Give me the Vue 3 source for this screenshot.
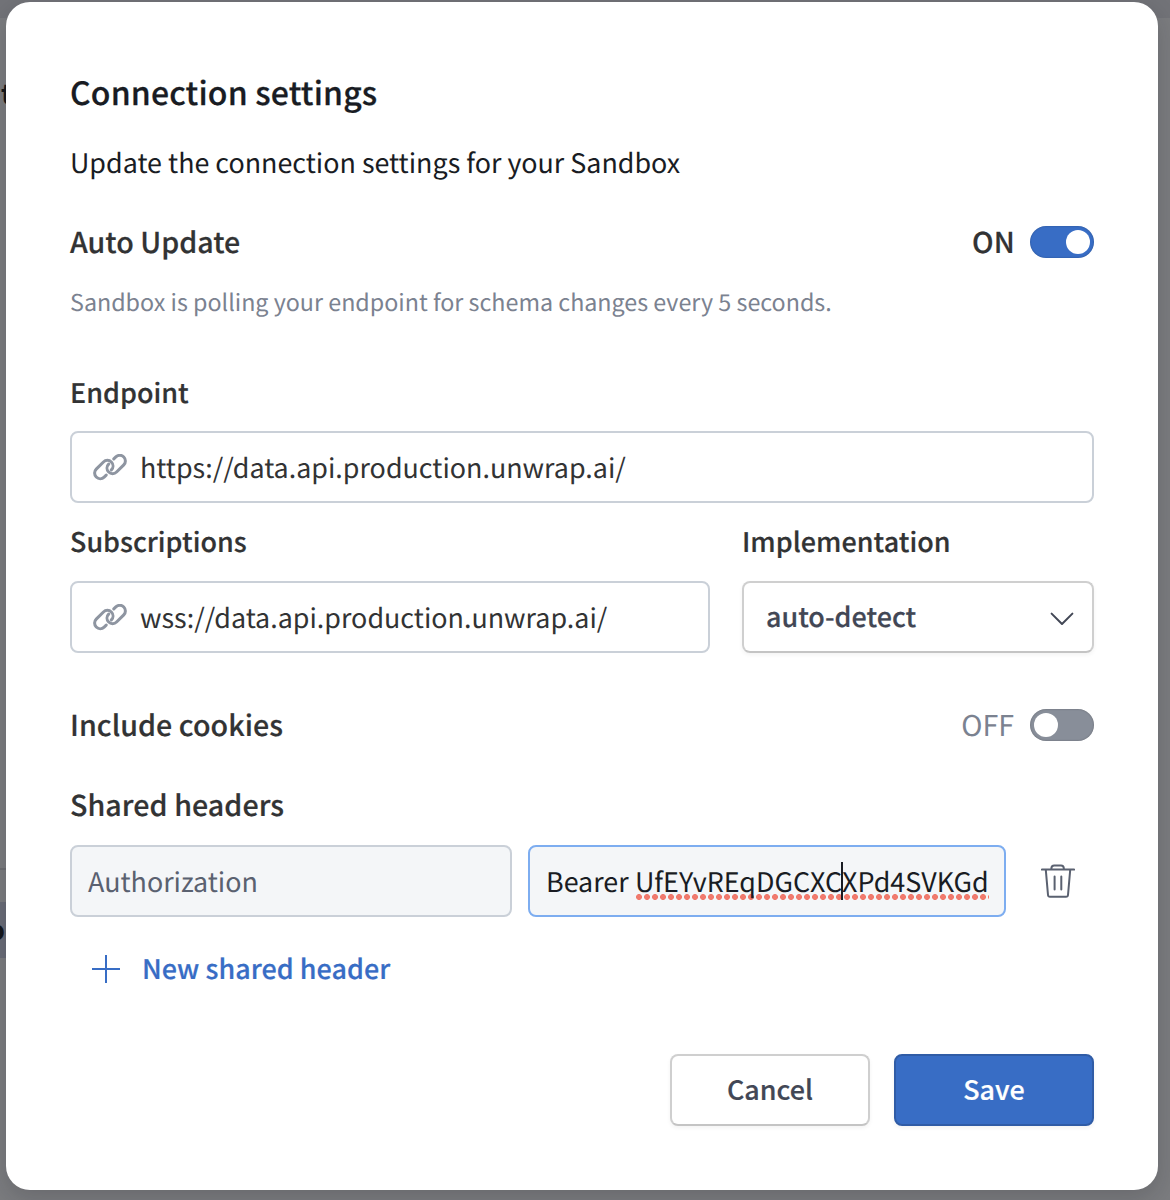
<script setup>
import { ref } from 'vue'

const endpoint = ref('https://data.api.production.unwrap.ai/')
const subscriptions = ref('wss://data.api.production.unwrap.ai/')
const autoUpdate = ref(true)
const includeCookies = ref(false)
</script>

<template>
  <div class="page">
    <div class="strip"></div>
    <div class="rule"></div>
    <div class="band"></div>
    <span class="peek peek-t">t</span>
    <span class="peek peek-o">o</span>

    <section class="modal">
      <h1>Connection settings</h1>
      <p class="intro">Update the connection settings for your Sandbox</p>

      <div class="toggle-row auto-row">
        <span class="title auto">Auto Update</span>
        <span class="state on">ON</span>
        <button class="switch" :class="{ active: autoUpdate }" @click="autoUpdate = !autoUpdate"><i></i></button>
      </div>
      <p class="hint">Sandbox is polling your endpoint for schema changes every 5 seconds.</p>

      <div class="label endpoint-label">Endpoint</div>
      <div class="field">
        <svg class="link" viewBox="0 0 34 27"><path d="M13.2 21.1 11.16 23.06A5.6 5.6 0 1 1 3.24 15.14L10.44 7.94A5.6 5.6 0 0 1 18.36 15.86M20.8 4.9 22.84 2.94A5.6 5.6 0 1 1 30.76 10.86L23.56 18.06A5.6 5.6 0 0 1 15.64 10.14" /></svg>
        <span class="value">{{ endpoint }}</span>
      </div>

      <div class="columns">
        <div class="subs">
          <div class="label subs-label">Subscriptions</div>
          <div class="field">
            <svg class="link" viewBox="0 0 34 27"><path d="M13.2 21.1 11.16 23.06A5.6 5.6 0 1 1 3.24 15.14L10.44 7.94A5.6 5.6 0 0 1 18.36 15.86M20.8 4.9 22.84 2.94A5.6 5.6 0 1 1 30.76 10.86L23.56 18.06A5.6 5.6 0 0 1 15.64 10.14" /></svg>
            <span class="value">{{ subscriptions }}</span>
          </div>
        </div>
        <div class="impl">
          <div class="label impl-label">Implementation</div>
          <div class="select">
            <span>auto-detect</span>
            <svg width="24" height="14" viewBox="0 0 24 14"><path d="M1.6 1.6 12 12 22.4 1.6" /></svg>
          </div>
        </div>
      </div>

      <div class="toggle-row cookies-row">
        <span class="title cookies">Include cookies</span>
        <span class="state off">OFF</span>
        <button class="switch" :class="{ active: includeCookies }" @click="includeCookies = !includeCookies"><i></i></button>
      </div>

      <div class="title headers">Shared headers</div>
      <div class="header-row">
        <div class="cell name">Authorization</div>
        <div class="cell token"><span class="bearer">Bearer</span><span class="misspelt">UfEYvREqDGCXC<span class="caret"></span>XPd4SVKGd</span></div>
        <svg class="trash" viewBox="0 0 34 34"><path d="M.8 5.6H33.2M10.4 5.4V4.2Q10.4 1.4 13.2 1.4H20Q22.8 1.4 22.8 4.2V5.4M4.8 5.8 7 31Q7.2 32.8 9 32.8H25Q26.8 32.8 27 31L29.2 5.8M13.6 12.6V25.4M20.3 12.6V25.4" /></svg>
      </div>

      <div class="add">
        <svg width="28" height="28" viewBox="0 0 28 28"><path d="M14 0V28M0 14H28" /></svg>
        <span>New shared header</span>
      </div>

      <div class="actions">
        <button class="btn cancel">Cancel</button>
        <button class="btn save">Save</button>
      </div>
    </section>
  </div>
</template>

<style>
body { margin: 0; }
</style>

<style scoped>
* { box-sizing: border-box; }
.page {
  position: relative; width: 1170px; height: 1200px; overflow: hidden;
  padding: 2px 0 0 6px; background: #7b7c7f;
  font-family: "Noto Sans CJK JP", "Noto Sans", sans-serif;
  text-rendering: geometricPrecision; white-space: nowrap;
}
.strip { position: absolute; inset: 0 0 auto 0; height: 18px; background: #727378; }
.rule { position: absolute; left: 0; top: 868px; width: 8px; height: 2px; background: #6d6e72; }
.band { position: absolute; left: 0; top: 902px; width: 8px; height: 56px; background: #696c77; }
.peek { position: absolute; color: #14161b; font-weight: 700; font-size: 27px; line-height: 40px; }
.peek-t { left: 1px; top: 73px; }
.peek-o { left: -12px; top: 909px; }
.modal {
  position: relative; width: 1152px; height: 1188px; padding: 70px 64px 0;
  border-radius: 24px; background: #fff; box-shadow: 0 8px 24px rgba(20, 22, 30, .18);
}
h1 {
  margin: 0; font-size: 32px; line-height: 40px; font-weight: 500; letter-spacing: .17px;
  color: #191c23; -webkit-text-stroke: .25px #191c23;
}
.intro { margin: 30px 0 0; font-size: 26.86px; line-height: 40px; color: #191c23; }
.toggle-row { display: flex; align-items: flex-start; height: 32px; }
.auto-row { margin-top: 44px; }
.cookies-row { margin-top: 56px; }
.title { font-size: 28.6px; line-height: 31px; font-weight: 500; color: #323334; -webkit-text-stroke: .2px #323334; }
.cookies { letter-spacing: .06px; }
.headers { margin-top: 48px; letter-spacing: .08px; }
.state { margin-left: auto; margin-right: 16px; font-size: 28.6px; line-height: 31px; }
.on { margin-right: 15px; font-weight: 500; color: #323334; -webkit-text-stroke: .2px #323334; letter-spacing: .2px; }
.off { color: #7b8290; }
.switch {
  display: flex; width: 64px; height: 32px; padding: 4px; border: 0; border-radius: 16px;
  background: #888e99; box-shadow: inset 0 0 2px rgba(0, 0, 0, .3);
}
.switch i { width: 24px; height: 24px; border-radius: 50%; background: #fff; }
.switch.active { justify-content: flex-end; background: #386dc5; }
.hint { margin: 27px 0 0; font-size: 23.29px; line-height: 32px; color: #7b8290; }
.label {
  font-size: 26.9px; line-height: 32px; font-weight: 500; letter-spacing: .03px;
  color: #323334; -webkit-text-stroke: .2px #323334;
}
.endpoint-label { margin: 59px 0 23px; }
.subs-label, .impl-label { margin: 22px 0 24px; }
.impl-label { letter-spacing: .05px; }
.field {
  display: flex; align-items: center; height: 72px; padding-left: 21px;
  border: 2px solid #cad0d8; border-radius: 8px;
}
.link { width: 34px; height: 27px; fill: none; stroke: #8e95a1; stroke-width: 3; stroke-linecap: round; }
.value { margin-left: 13px; padding-bottom: 1px; font-size: 26.86px; line-height: 40px; color: #323334; }
.columns { display: flex; gap: 32px; }
.subs { width: 640px; }
.impl { width: 352px; }
.select {
  display: flex; align-items: center; justify-content: space-between; height: 72px; padding: 0 18px 0 22px;
  border: 2px solid #cfcfcf; border-bottom-color: #c4c4c4; border-radius: 8px;
  box-shadow: 0 2px 4px rgba(0, 0, 0, .05);
}
.select span { padding-bottom: 3px; font-size: 26.9px; line-height: 40px; font-weight: 500; color: #424755; -webkit-text-stroke: .2px #424755; }
.select svg { fill: none; stroke: #424755; stroke-width: 2; stroke-linecap: round; stroke-linejoin: round; margin-top: 3px; }
.header-row { display: flex; align-items: center; margin-top: 25px; }
.cell {
  height: 72px; padding: 0 16px; border: 2px solid #cad0d8; border-radius: 8px;
  background: #f4f6f8; font-size: 26.86px; line-height: 67px; color: #5a6170;
}
.name { width: 442px; }
.token { display: flex; width: 478px; margin-left: 16px; border-color: #7dadf0; color: #191c23; }
.bearer { width: 89px; }
.misspelt {
  position: relative; height: 53px; flex-shrink: 0;
  background: radial-gradient(circle at 4px 3px, #f07a6d 2.6px, transparent 3.3px) 0 47px / 8px 6px repeat-x;
}
.bearer { flex: 0 0 89px; }
.caret { position: relative; }
.caret::before { content: ""; position: absolute; left: -1px; top: 1px; width: 2px; height: 38px; background: #191c23; }
.trash { width: 34px; height: 34px; margin-left: 35px; fill: none; stroke: #5a6170; stroke-width: 2; stroke-linecap: round; }
.add { display: flex; align-items: flex-end; height: 32px; margin: 34px 0 0 22px; }
.add svg { stroke: #386dc5; stroke-width: 2; }
.add span { margin-left: 22px; font-size: 26.9px; line-height: 30px; font-weight: 500; letter-spacing: .05px; color: #386dc5; -webkit-text-stroke: .2px #386dc5; }
.actions { display: flex; justify-content: flex-end; gap: 24px; margin-top: 71px; }
.btn {
  width: 200px; height: 72px; padding: 0 0 3px; border-radius: 8px; font: 500 26.9px/40px "Noto Sans CJK JP", sans-serif;
  box-shadow: 0 2px 4px rgba(0, 0, 0, .05);
}
.cancel { border: 2px solid #cfcfcf; border-bottom-color: #c4c4c4; background: #fff; color: #424755; -webkit-text-stroke: .2px #424755; }
.save { border: 2px solid #305ca6; background: #386dc5; color: #fff; -webkit-text-stroke: .2px #fff; }
</style>
